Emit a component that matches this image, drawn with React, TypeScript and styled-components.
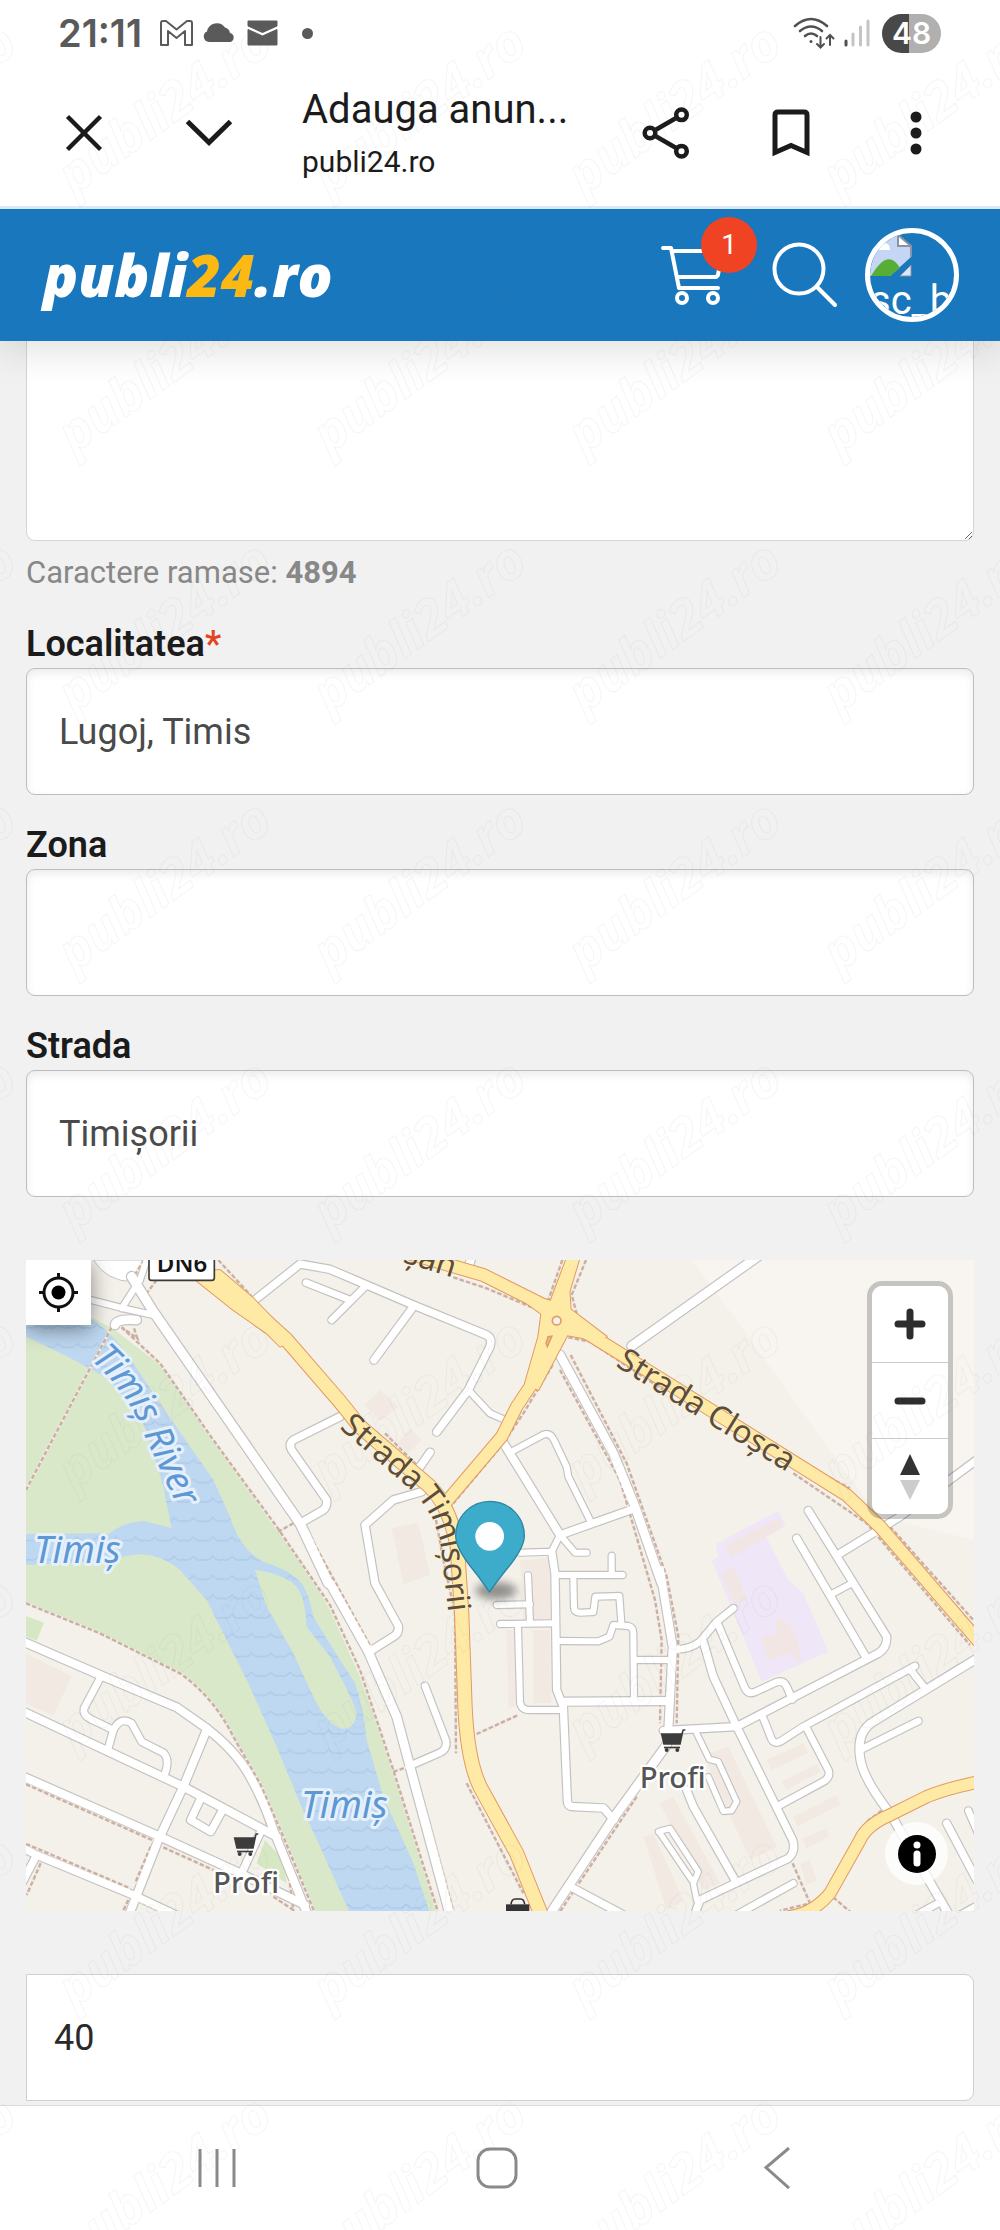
import React from "react";
import styled, { createGlobalStyle } from "styled-components";

const GlobalStyle = createGlobalStyle`
  * { box-sizing: border-box; }
  body {
    margin: 0;
    background: #f1f1f1;
    color: #1b1b1b;
    font-family: Roboto, "Liberation Sans", sans-serif;
  }
  button, input, textarea { font-family: inherit; }
`;

const Page = styled.div`
  position: relative;
  min-height: 100vh;
  display: flex;
  flex-direction: column;
`;

const StatusBar = styled.div`
  display: flex;
  align-items: center;
  justify-content: space-between;
  height: 60px;
  padding: 6px 59px 0 58px;
  background: #fff;
`;

const StatusGroup = styled.div<{ $gap: number }>`
  display: flex;
  align-items: center;
  gap: ${(p) => p.$gap}px;
`;

const Clock = styled.time`
  margin-right: 8px;
  font: 600 38px/40px Inter, Roboto, sans-serif;
  color: #5a5a5a;
`;

const MoreDot = styled.span`
  width: 11px;
  height: 11px;
  margin-left: 14px;
  border-radius: 50%;
  background: #5a5a5a;
`;

const Battery = styled.span`
  width: 59px;
  height: 39px;
  border-radius: 20px;
  background: linear-gradient(90deg, #484848 46%, #b0b0b0 46%);
  color: #fff;
  font: 600 30px/39px Inter, Roboto, sans-serif;
  text-align: center;
`;

const BrowserBar = styled.div`
  display: flex;
  align-items: center;
  gap: 61px;
  height: 149px;
  padding: 0 52px;
  background: #fff;
  border-bottom: 3px solid #dbe9f2;
`;

const IconButton = styled.button`
  display: flex;
  align-items: center;
  justify-content: center;
  flex: none;
  width: 64px;
  height: 64px;
  padding: 0;
  border: 0;
  background: none;
  color: #1b1b1b;
`;

const PageTitle = styled.div`
  flex: 1;
  min-width: 0;
  display: flex;
  flex-direction: column;
  gap: 2px;
  white-space: nowrap;
`;

const TitleText = styled.span`
  font-size: 40px;
  line-height: 56px;
`;

const HostText = styled.span`
  font-size: 30px;
  line-height: 44px;
`;

const SiteHeader = styled.header`
  position: relative;
  z-index: 1;
  display: flex;
  align-items: center;
  justify-content: space-between;
  height: 132px;
  padding: 0 41px 0 43px;
  background: #1877bd;
  box-shadow: 0 6px 40px rgba(0, 0, 0, 0.14);
  clip-path: inset(0 0 -80px 0);
`;

const Logo = styled.a`
  font: italic 800 58px/72px "Open Sans", Lato, sans-serif;
  color: #fff;
  text-decoration: none;
`;

const LogoAccent = styled.span`
  color: #fdb913;
`;

const HeaderActions = styled.div`
  display: flex;
  align-items: center;
  gap: 27px;
`;

const HeaderButton = styled.button`
  position: relative;
  display: flex;
  padding: 0;
  border: 0;
  background: none;
`;

const CartButton = styled(HeaderButton)`
  margin-right: 21px;
`;

const CartBadge = styled.span`
  position: absolute;
  left: 40px;
  top: -28px;
  width: 56px;
  height: 56px;
  border-radius: 50%;
  background: #ef4323;
  color: #fff;
  font-size: 28px;
  line-height: 56px;
  text-align: center;
`;

const Avatar = styled.button`
  display: flex;
  flex-direction: column;
  width: 94px;
  height: 94px;
  padding: 2px 0 0;
  border: 5px solid #fff;
  border-radius: 50%;
  background: none;
  overflow: hidden;
  color: #fff;
  text-align: left;
  font-size: 40px;
  line-height: 46px;
`;

const AvatarIcon = styled.svg`
  flex: none;
`;

const Form = styled.form`
  flex: 1;
  padding: 0 26px 4px;
`;

const Description = styled.textarea`
  display: block;
  width: 100%;
  height: 200px;
  padding: 32px;
  border: 1px solid #d5d5d5;
  border-top: 0;
  border-radius: 0 0 9px 9px;
  background: #fff;
  font-size: 36px;
  resize: vertical;
  outline: 0;
`;

const Counter = styled.p`
  margin: 14px 0 33px;
  color: #888;
  font-size: 31px;
  line-height: 36px;
`;

const Field = styled.div`
  margin-bottom: 30px;
`;

const Label = styled.label`
  display: block;
  margin-bottom: 4px;
  font-size: 36px;
  font-weight: 600;
  line-height: 40px;
`;

const Required = styled.span`
  color: #e4431f;
`;

const TextInput = styled.input`
  display: block;
  width: 100%;
  height: 127px;
  padding: 0 32px;
  border: 1px solid #bdbdbd;
  border-radius: 9px;
  background: #fff;
  box-shadow: inset 0 4px 8px rgba(0, 0, 0, 0.08);
  color: #4a4a4a;
  font-size: 36px;
  outline: 0;
`;

const NumberInput = styled(TextInput)`
  padding: 0 27px;
  border-color: #d0d0d0;
  border-radius: 0 9px 9px 0;
  box-shadow: none;
  color: #2a2a2a;
`;

const MapBox = styled.div`
  position: relative;
  height: 651px;
  margin: 63px 0;
  overflow: hidden;
`;

const MapSvg = styled.svg`
  display: block;
  width: 100%;
  height: 100%;
  font-family: "Noto Sans", "Open Sans", sans-serif;
`;

const LocateButton = styled.button`
  position: absolute;
  left: 0;
  top: 0;
  display: flex;
  align-items: center;
  justify-content: center;
  width: 65px;
  height: 65px;
  padding: 0;
  border: 0;
  background: #fff;
  box-shadow: 0 4px 20px rgba(0, 0, 0, 0.45);
`;

const ZoomControls = styled.div`
  position: absolute;
  right: 21px;
  top: 21px;
  display: flex;
  flex-direction: column;
  width: 86px;
  border: 5px solid rgba(0, 0, 0, 0.2);
  border-radius: 15px;
`;

const ZoomButton = styled.button`
  display: flex;
  align-items: center;
  justify-content: center;
  height: 76px;
  padding: 0;
  border: 0;
  background: #fff;
  & + & { border-top: 1px solid #ccc; }
  &:first-child { border-radius: 10px 10px 0 0; }
  &:last-child { border-radius: 0 0 10px 10px; }
`;

const InfoButton = styled.button`
  position: absolute;
  right: 26px;
  bottom: 26px;
  display: flex;
  align-items: center;
  justify-content: center;
  width: 63px;
  height: 63px;
  padding: 0;
  border: 0;
  border-radius: 50%;
  background: rgba(255, 255, 255, 0.75);
`;

const NavBar = styled.nav`
  display: grid;
  grid-template-columns: repeat(3, 1fr);
  align-items: center;
  justify-items: center;
  height: 125px;
  padding: 0 83px 0 77px;
  border-top: 1px solid #dcdcdc;
  background: #fff;
`;

const WatermarkLayer = styled.svg`
  position: absolute;
  inset: 0;
  z-index: 2;
  width: 100%;
  height: 100%;
  pointer-events: none;
`;

/* ---------- map data: coordinates are local to each map tile ---------- */

type Tile = "NW" | "N" | "NE" | "SW" | "S" | "SE";
type Shape = [tile: Tile, d: string, value?: number];

const tileOffset: Record<Tile, string> = {
  NW: "translate(0 0)",
  N: "translate(990 0)",
  NE: "translate(1980 0)",
  SW: "translate(0 990)",
  S: "translate(990 990)",
  SE: "translate(1980 990)",
};

const streets: Shape[] = [
  ["NW", "M395 110 L460 215 L900 850 L985 1030", 28],
  ["NW", "M265 178 L370 205 L460 225"],
  ["NW", "M440 60 L420 120 L365 205"],
  ["NW", "M410 240 Q350 235 345 255", 26],
  ["NW", "M1020 530 L880 600 Q865 612 875 630 L980 780 Q982 800 970 810 L900 850", 22],
  ["N", "M-225 180 L-90 72 L0 88 L110 135 L250 195 L470 285 Q488 295 480 320 L415 450 L320 576", 22],
  ["N", "M250 200 L132 360", 22],
  ["N", "M105 140 L5 240", 20],
  ["N", "M-72 128 L60 180", 20],
  ["N", "M415 450 L480 520 L525 540"],
  ["N", "M425 50 L413 90", 24],
  ["N", "M300 637 L260 695", 22],
  ["N", "M275 755 L190 780 L105 855 L135 1030 L205 1158 Q208 1180 190 1190 L115 1237", 22],
  ["N", "M515 600 L690 885", 24],
  ["N", "M545 635 L640 584 Q660 576 672 600 L710 680 L715 710 L782 845"],
  ["N", "M690 885 L915 805", 22],
  ["N", "M690 885 L735 938 L770 938"],
  ["N", "M690 885 L665 935 L570 938"],
  ["N", "M665 935 L675 1000 L680 1350 L700 1400 L712 1680 Q712 1700 730 1700 L820 1704 L852 1740", 22],
  ["N", "M690 345 L850 640 L915 800 L995 1030", 26],
  ["N", "M845 947 L845 1003"],
  ["S", "M690 15 L878 15"],
  ["S", "M594 16 L600 158"],
  ["S", "M500 105 L600 103"],
  ["S", "M510 162 L675 160"],
  ["S", "M564 170 L570 395 Q572 420 600 420 L700 420"],
  ["S", "M730 22 L732 112 Q732 128 750 128 L790 126 L796 80 L868 78 L874 160"],
  ["S", "M690 213 L805 214 L838 200 L850 165 L895 168 Q910 172 910 190 L912 390"],
  ["S", "M915 270 L1025 270"],
  ["S", "M700 395 L1020 393", 24],
  ["S", "M0 40 L115 245 L200 440 L240 590 L360 1035", 26],
  ["S", "M285 348 L348 512 Q352 538 330 548 L245 585", 20],
  ["S", "M1010 525 L850 745 L655 1040", 26],
  ["S", "M730 955 L890 1040", 22],
  ["NE", "M-85 318 L300 45", 26],
  ["NE", "M950 660 L720 830 L540 940 ", 22],
  ["SE", "M0 0 L38 230 L25 480", 24],
  ["SE", "M445 -178 L680 200 Q682 232 655 250 L230 470 L10 482", 22],
  ["SE", "M410 -95 L620 265", 22],
  ["SE", "M510 75 L575 40"],
  ["SE", "M220 115 L170 155 L120 215 Q90 238 50 238", 20],
  ["SE", "M175 165 L255 355 Q265 374 285 366 L350 336 Q372 330 380 350 L397 388", 20],
  ["SE", "M130 215 L160 320 L230 470 L398 810 Q408 845 385 865 L120 990 L102 1040", 22],
  ["SE", "M310 445 L335 508 Q345 525 365 512 L430 470 L765 288", 20],
  ["SE", "M752 300 L795 355", 20],
  ["SE", "M960 260 L640 455 Q590 485 600 560 Q605 620 690 730 L870 1040", 24],
  ["SE", "M605 538 L775 453", 20],
  ["SE", "M440 475 L505 600 Q512 618 495 632 L360 705", 20],
  ["SE", "M110 490 L148 568 L175 575 L230 695 L215 722 L190 724 L145 620", 16],
  ["SE", "M80 660 L100 710 L225 930", 22],
  ["SE", "M-5 785 L30 775 L115 905 L100 940 L110 990", 16],
  ["SE", "M0 790 L95 930", 16],
  ["SE", "M400 940 L220 1040", 20],
  ["SE", "M860 760 L950 930", 22],
  ["SE", "M925 722 L955 790", 20],
  ["SE", "M760 1040 L830 1002", 20],
  ["SE", "M890 1040 L950 1008", 20],
  ["SW", "M70 215 L300 315 L530 412 L620 475 Q710 545 750 620 Q790 690 820 780 L925 1040", 24],
  ["SW", "M70 425 L550 650 L830 800", 24],
  ["SW", "M300 325 L252 415 Q248 435 270 446 L340 480 L322 545", 20],
  ["SW", "M340 480 Q362 438 395 460 L425 515 L490 548 Q512 570 492 618", 20],
  ["SW", "M70 620 L480 800 L710 905 L915 1005", 24],
  ["SW", "M620 480 L550 650 L475 810 L385 1040", 24],
  ["SW", "M600 690 L572 750 L632 785 L665 725", 22],
  ["SW", "M780 790 L720 920", 22],
  ["SW", "M70 835 L110 855 L400 975 L560 1050", 22],
  ["SW", "M105 865 L60 950", 22],
];

const mainRoads: Shape[] = [
  ["NW", "M700 155 L860 300 L1020 485 L1080 560 L1290 740 Q1350 800 1372 920 L1385 1120 L1395 1400 Q1402 1560 1440 1640 L1550 1840 L1630 2040", 40],
  ["N", "M230 38 L460 105 L640 195 L690 240 L780 285 L990 415 L1550 765 L1650 860 L1960 1220", 36],
  ["N", "M735 40 L690 190 L670 270 L640 380 L560 500 L515 590 L345 790", 34],
  ["SE", "M390 1040 Q460 1030 510 970 L600 810 Q620 765 690 735 L800 680 Q860 655 960 635", 34],
];

const junctions: Shape[] = [
  ["NW", "M560 98 L660 90 L760 175 L880 300 L840 320 L800 280 L700 210 Z"],
  ["N", "M708 60 L662 182 L600 168 L588 188 L634 222 L625 290 L585 430 L625 450 L712 286 L790 300 L830 290 L722 208 L718 150 L745 60 Z"],
];

const footpaths: Shape[] = [
  ["NW", "M365 262 L480 370 L640 600 L830 860 L990 1095 L1080 1290 L1180 1590 L1315 2020"],
  ["NW", "M335 262 L78 750"],
  ["NW", "M402 265 L412 295 L365 262"],
  ["NW", "M432 60 L395 120 M470 120 L440 160"],
  ["NW", "M655 60 L760 175 M790 215 L870 285 L1020 460"],
  ["NW", "M880 850 L835 875 M920 870 L1120 1235"],
  ["SW", "M78 100 L300 190 L540 310 Q640 380 700 500 L780 640 L850 800 L945 1030"],
  ["SW", "M78 643 L460 812 M490 832 L640 900 M78 822 L110 835 L390 955"],
  ["SW", "M452 830 L405 940 M385 990 L368 1025 M122 880 L80 975 M410 990 L490 1025 M820 980 L880 1020 L868 930"],
  ["N", "M370 112 L470 145 L620 208 M697 60 L655 180 M768 60 L725 165 L740 220"],
  ["N", "M715 292 L780 305 L1000 450 M1390 700 L1610 850 L1920 1215"],
  ["N", "M1410 668 L1560 745 M1680 860 L1930 1140"],
  ["N", "M668 375 L580 520 L520 610 L370 790 M690 390 L870 720 L975 1080 L995 1200 L990 1450"],
  ["N", "M722 345 L890 670 L1010 1010 L1045 1190 L1040 1450 M165 580 L260 675"],
  ["N", "M318 840 L340 960 L375 1120 L378 1540"],
  ["S", "M250 600 L370 1025 M410 640 L580 970 M440 492 L565 435 M920 680 L690 1025"],
  ["S", "M190 605 L235 590"],
  ["SE", "M398 880 L450 1000 L360 1022 M520 982 L570 1025 M665 722 L620 755 L600 800"],
];

const blocks: Shape[] = [
  ["SW", "M78 250 L215 318 L160 437 L78 402 Z"],
  ["N", "M150 450 L205 500 L150 545 L105 495 Z"],
  ["N", "M240 565 L275 600 L235 640 L200 610 Z"],
  ["N", "M185 865 L265 848 L300 1005 L220 1032 Z"],
  ["N", "M570 962 L660 952 L660 1140 L580 1140 Z"],
  ["S", "M610 180 L660 180 L664 400 L610 400 Z"],
  ["S", "M528 180 L552 180 L556 408 L536 414 Z"],
  ["SE", "M130 555 L205 530 L350 830 L270 870 Z"],
  ["SE", "M320 570 L430 520 L445 548 L335 600 Z"],
  ["SE", "M365 635 L470 582 L482 605 L380 660 Z"],
  ["SE", "M400 740 L530 675 L540 705 L412 770 Z"],
  ["SE", "M425 805 L500 775 L508 800 L440 835 Z"],
  ["SE", "M0 700 L40 680 L180 940 L130 960 Z"],
  ["SE", "M-50 800 L-20 790 L70 990 L20 1020 Z"],
  ["SE", "M420 880 L450 870 L470 930 L440 945 Z"],
];

function Strokes({ shapes, color, extra = 0 }: { shapes: Shape[]; color: string; extra?: number }) {
  return (
    <g fill="none" stroke={color} strokeLinecap="round" strokeLinejoin="round">
      {shapes.map(([tile, d, width = 18], i) => (
        <path key={i} d={d} transform={tileOffset[tile]} strokeWidth={width + extra} />
      ))}
    </g>
  );
}

function Areas({ shapes, fill, stroke }: { shapes: Shape[]; fill: string; stroke?: string }) {
  return (
    <g fill={fill} stroke={stroke} strokeWidth={stroke ? 6 : 0} strokeLinejoin="round">
      {shapes.map(([tile, d], i) => (
        <path key={i} d={d} transform={tileOffset[tile]} />
      ))}
    </g>
  );
}

function ShopPin({ x, y }: { x: number; y: number }) {
  return (
    <g transform={`translate(${x} ${y})`} fill="#3c3c3c">
      <path d="M-2 12 L60 12 L64 0 L72 0 L72 4 L67 4 L58 46 L6 46 Z" />
      <path d="M8 52 H56 V57 H8 Z" />
      <circle cx="16" cy="62" r="6" />
      <circle cx="48" cy="62" r="6" />
    </g>
  );
}

function StreetMap() {
  return (
    <MapSvg viewBox="78 60 2844 1953" preserveAspectRatio="xMidYMid slice" role="img" aria-label="Harta">
      <defs>
        <pattern id="waves" width="116" height="58" patternUnits="userSpaceOnUse">
          <path d="M0 20 Q14 38 29 30 Q46 38 58 20 Q72 38 87 30 Q104 38 116 20" fill="none" stroke="#aeca e8" strokeWidth="4" />
          <path d="M0 20 Q14 38 29 30 Q46 38 58 20 Q72 38 87 30 Q104 38 116 20" fill="none" stroke="#aecae8" strokeWidth="4" />
        </pattern>
        <filter id="soft" x="-50%" y="-50%" width="200%" height="200%">
          <feGaussianBlur stdDeviation="12" />
        </filter>
        <path id="river-line" d="M296 332 Q425 450 470 580 L660 990" />
        <path id="timisorii-line" d="M1038 540 L1250 722 Q1335 800 1355 920 L1392 1250" />
        <path id="closca-line" d="M1862 350 L2500 745" />
      </defs>
      <rect x="78" y="60" width="2844" height="1953" fill="#f4f1eb" />
      <path d="M2075 60 L2180 200 L2540 700 L2640 830 L2922 900 L2922 60 Z" fill="#f8f5f0" />
      <path
        d="M78 250 L280 235 L345 270 L500 390 L640 600 L830 870 L945 1030 L990 1110 L1080 1310 L1180 1590 L1320 2020 L945 2020 L850 1790 L780 1630 L700 1490 Q640 1370 540 1300 L300 1180 L78 1090 Z"
        fill="#d9e8c9"
      />
      <path d="M78 1128 L132 1148 L110 1202 L78 1190 Z M795 1800 L850 1860 L860 1930 L770 1870 Z" fill="#d5e8c3" />
      {["#bed8f1", "url(#waves)"].map((fill) => (
        <path
          key={fill}
          d="M78 255 L200 235 L280 240 Q350 290 400 370 L480 490 L640 720 L690 830 Q720 930 790 965 Q870 990 905 1030 Q930 1070 940 1130 L1020 1260 L1065 1330 Q1090 1400 1100 1500 L1150 1670 L1240 1870 L1290 2020 L1050 2020 L960 1820 L900 1690 L830 1520 L750 1340 L690 1220 L620 1080 L540 990 Q480 940 420 943 Q380 945 300 965 L78 975 L78 882 L330 880 Q380 840 440 845 L515 865 L490 740 L450 600 L420 530 L330 420 Q230 360 78 290 Z"
          fill={fill}
        />
      ))}
      <path
        d="M765 990 Q850 1000 890 1040 Q915 1070 920 1160 L990 1250 Q1060 1380 1070 1420 Q1065 1465 1030 1467 Q980 1455 940 1370 L880 1240 L800 1100 Z"
        fill="#d9e8c9"
      />
      <path
        d="M168 912 L355 812 L378 858 L318 890 L385 1020 L430 1060 L505 1235 L305 1325 L225 1130 L155 960 L175 950 Z"
        transform={tileOffset.NE}
        fill="#efe6f8"
      />
      <path
        d="M195 915 L355 835 L370 860 L215 955 Z M182 1000 L225 982 L260 1080 L225 1095 Z M305 1185 L345 1190 L350 1130 L385 1150 L415 1200 L425 1275 L395 1240 L320 1260 Z"
        transform={tileOffset.NE}
        fill="#f2e6e4"
      />
      <Areas shapes={blocks} fill="#f2e9e3" />
      <path d="M280 60 Q320 125 400 125 L440 60 Z" fill="#fff" stroke="#c6c4c3" strokeWidth="3" />
      <Strokes shapes={streets} color="#c4c2c1" extra={7} />
      <g fill="none" stroke="#f3e9e2" strokeWidth="9">
        {footpaths.map(([tile, d], i) => (
          <path key={i} d={d} transform={tileOffset[tile]} />
        ))}
      </g>
      <g fill="none" stroke="#c8b0a2" strokeWidth="7" strokeDasharray="13 7">
        {footpaths.map(([tile, d], i) => (
          <path key={i} d={d} transform={tileOffset[tile]} />
        ))}
      </g>
      <Strokes shapes={streets} color="#ffffff" />
      <Areas shapes={junctions} fill="#e39a62" stroke="#e39a62" />
      <Strokes shapes={mainRoads} color="#e39a62" extra={6} />
      <Areas shapes={junctions} fill="#feeaa4" />
      <Strokes shapes={mainRoads} color="#feeaa4" />
      <circle cx="1670" cy="242" r="13" fill="#f4f1eb" stroke="#e39a62" strokeWidth="5" />
      <path d="M1644 290 L1656 288 L1642 320 L1638 310 Z" fill="#e8b48a" stroke="#e39a62" strokeWidth="4" />

      <g fontSize="96" fill="#5d4c38" stroke="#fdf3d0" strokeWidth="3" paintOrder="stroke">
        <text dy="32">
          <textPath href="#timisorii-line">Strada Timișorii</textPath>
        </text>
        <text dy="32">
          <textPath href="#closca-line">Strada Cloșca</textPath>
        </text>
        <text transform="translate(1206 66) rotate(17)">șan</text>
      </g>
      <g fontSize="112" fontStyle="italic" fill="#5d98d5" stroke="#e6f0fa" strokeWidth="18" strokeLinejoin="round" paintOrder="stroke">
        <text dy="36">
          <textPath href="#river-line">Timiș River</textPath>
        </text>
        <text x="362" y="968" textAnchor="end">Timiș</text>
        <text x="1033" y="1735" textAnchor="middle">Timiș</text>
      </g>
      <g fontSize="88" fontWeight="500" fill="#555" stroke="#fff" strokeWidth="14" strokeLinejoin="round" paintOrder="stroke" textAnchor="middle">
        <text x="738" y="1958">Profi</text>
        <text x="2018" y="1645">Profi</text>
      </g>
      <ShopPin x={703} y={1780} />
      <ShopPin x={1984} y={1468} />
      <g fill="#333">
        <path d="M1518 1993 H1588 V2014 H1518 Z" />
        <path d="M1533 1993 Q1535 1977 1545 1977 H1562 Q1572 1977 1574 1993" fill="none" stroke="#333" strokeWidth="5" />
      </g>
      <rect x="447" y="20" width="196" height="101" rx="8" fill="#fff" stroke="#3b3b3b" strokeWidth="5" />
      <text x="546" y="97" fontSize="72" fontWeight="600" textAnchor="middle" fill="#161616">DN6</text>

      <ellipse cx="1488" cy="1052" rx="62" ry="26" fill="#000" opacity="0.4" filter="url(#soft)" />
      <path
        d="M1468 1056 Q1450 1028 1420 990 Q1367 925 1367 887 A103 103 0 0 1 1573 887 Q1573 925 1518 990 Q1488 1028 1468 1056 Z"
        fill="#3dacca"
        stroke="#2b86a0"
        strokeWidth="4"
      />
      <circle cx="1469" cy="889" r="43" fill="#fff" />
    </MapSvg>
  );
}

function Watermark() {
  return (
    <WatermarkLayer aria-hidden="true">
      <defs>
        <pattern id="mark" x="40" y="0" width="255" height="259" patternUnits="userSpaceOnUse">
          <text
            transform="translate(34 196) rotate(-36)"
            fontFamily="'Open Sans', sans-serif"
            fontSize="52"
            fontWeight="700"
            fontStyle="italic"
            fill="none"
            stroke="#777"
            strokeOpacity="0.07"
          >
            publi24.ro
          </text>
        </pattern>
      </defs>
      <rect width="100%" height="100%" fill="url(#mark)" />
    </WatermarkLayer>
  );
}

function StatusIcons() {
  return (
    <>
      <svg width="33" height="26" viewBox="0 0 33 26" fill="none" stroke="#5a5a5a" strokeWidth="2" strokeLinejoin="round">
        <path d="M1 3 Q1 1 3 1 H6 L16.500 9.500 L27 1 H30 Q32 1 32 3 V25 H25 V11 L16.500 18 L8 11 V25 H1 Z" />
      </svg>
      <svg width="34" height="20" viewBox="0 0 34 20" fill="#5a5a5a">
        <path d="M6 19 A5.500 5.500 0 0 1 4 8.500 A10 10 0 0 1 22 4.500 A7 7 0 0 1 27 10 A4.800 4.800 0 0 1 28 19 Z" />
      </svg>
      <svg width="31" height="26" viewBox="0 0 31 26" fill="#5a5a5a">
        <path d="M1 1 H30 V6 L15.500 12.500 L1 6 Z M1 9.500 L15.500 16 L30 9.500 V25 H1 Z" stroke="#5a5a5a" strokeLinejoin="round" />
      </svg>
    </>
  );
}

function NetworkIcons() {
  return (
    <>
      <svg width="42" height="32" viewBox="0 0 42 32" fill="none" stroke="#505050" strokeWidth="2.600" strokeLinecap="round">
        <path d="M2 9 Q18 -5 34 9" />
        <path d="M7 14 Q18 5 29 14" />
        <path d="M12 19 Q18 14 24 19" />
        <circle cx="18" cy="24.500" r="1.500" fill="#505050" stroke="none" />
        <path d="M27.500 20 V30 M24 27 L27.500 30.500 L31 27 M37 28 V18 M33.500 21.500 L37 18 L40.500 21.500" strokeWidth="2" />
      </svg>
      <svg width="29" height="28" viewBox="0 0 29 28" strokeWidth="3" strokeLinecap="round" stroke="#c4c4c4">
        <path d="M2 22 V26" stroke="#505050" />
        <path d="M9 15 V26 M16.500 8 V26 M24 2 V26" />
      </svg>
    </>
  );
}

export default function App() {
  return (
    <Page>
      <GlobalStyle />
      <StatusBar>
        <StatusGroup $gap={10}>
          <Clock>21:11</Clock>
          <StatusIcons />
          <MoreDot />
        </StatusGroup>
        <StatusGroup $gap={9}>
          <NetworkIcons />
          <Battery>48</Battery>
        </StatusGroup>
      </StatusBar>

      <BrowserBar>
        <IconButton aria-label="Inchide">
          <svg width="38" height="38" viewBox="0 0 38 38" stroke="currentColor" strokeWidth="4.500">
            <path d="M2.500 2.500 L35.500 35.500 M35.500 2.500 L2.500 35.500" />
          </svg>
        </IconButton>
        <IconButton aria-label="Minimizeaza">
          <svg width="48" height="28" viewBox="0 0 48 28" fill="none" stroke="currentColor" strokeWidth="5">
            <path d="M2.500 2.500 L24 23.500 L45.500 2.500" />
          </svg>
        </IconButton>
        <PageTitle>
          <TitleText>Adauga anun...</TitleText>
          <HostText>publi24.ro</HostText>
        </PageTitle>
        <IconButton aria-label="Distribuie">
          <svg width="48" height="52" viewBox="0 0 48 52" fill="none" stroke="currentColor" strokeWidth="4.500">
            <circle cx="8" cy="26" r="5.300" />
            <circle cx="39.500" cy="7.800" r="5.300" />
            <circle cx="39.500" cy="44.200" r="5.300" />
            <path d="M12.500 23.500 L35 10.500 M12.500 28.500 L35 41.500" />
          </svg>
        </IconButton>
        <IconButton aria-label="Marcaj">
          <svg width="38" height="48" viewBox="0 0 38 48" fill="none" stroke="currentColor" strokeWidth="5">
            <path d="M3 43.500 V6 Q3 3 6 3 H32 Q35 3 35 6 V43.500 L19 36.500 Z" />
          </svg>
        </IconButton>
        <IconButton aria-label="Meniu">
          <svg width="12" height="44" viewBox="0 0 12 44" fill="currentColor">
            <circle cx="6" cy="6" r="5.500" />
            <circle cx="6" cy="22" r="5.500" />
            <circle cx="6" cy="38" r="5.500" />
          </svg>
        </IconButton>
      </BrowserBar>

      <SiteHeader>
        <Logo href="#">
          publi<LogoAccent>24</LogoAccent>.ro
        </Logo>
        <HeaderActions>
          <CartButton aria-label="Cos">
            <svg width="63" height="60" viewBox="0 0 63 60" fill="none" stroke="#fff" strokeWidth="4" strokeLinecap="round" strokeLinejoin="round">
              <path d="M2 3 H10 L18 43 H57 M13 6 H61 L57 30 Q56 32 54 32 H17" />
              <circle cx="21" cy="53" r="5" />
              <circle cx="52" cy="53" r="5" />
            </svg>
            <CartBadge>1</CartBadge>
          </CartButton>
          <HeaderButton aria-label="Cauta">
            <svg width="66" height="66" viewBox="0 0 66 66" fill="none" stroke="#fff" strokeWidth="4" strokeLinecap="round">
              <circle cx="27" cy="27" r="24.500" />
              <path d="M45 45 L63 63" />
            </svg>
          </HeaderButton>
          <Avatar>
            <AvatarIcon width="43" height="43" viewBox="0 0 43 43" aria-hidden="true">
              <path d="M0 0 H29 L41 11 V22 L20 41 H0 Z" fill="#c5d6f4" />
              <path d="M2 13 Q6 4 14 8 Q20 8 20 15 H2 Z" fill="#fff" />
              <path d="M1 41 Q18 12 30 33 L20 41 Z" fill="#57ae34" />
              <path d="M28 0 V11 H41" fill="#fff" stroke="#8a93a3" strokeWidth="2" />
              <path d="M28 0 L41 11 V22" fill="none" stroke="#8a93a3" strokeWidth="2" />
              <path d="M41 30 V41 H30 Z" fill="#dbe6f8" stroke="#8a93a3" />
            </AvatarIcon>
            sc_b
          </Avatar>
        </HeaderActions>
      </SiteHeader>

      <Form>
        <Description aria-label="Descriere" />
        <Counter>
          Caractere ramase: <b>4894</b>
        </Counter>
        <Field>
          <Label htmlFor="city">
            Localitatea<Required>*</Required>
          </Label>
          <TextInput id="city" defaultValue="Lugoj, Timis" />
        </Field>
        <Field>
          <Label htmlFor="area">Zona</Label>
          <TextInput id="area" />
        </Field>
        <Field>
          <Label htmlFor="street">Strada</Label>
          <TextInput id="street" defaultValue="Timișorii" />
        </Field>

        <MapBox>
          <StreetMap />
          <LocateButton type="button" aria-label="Locatia mea">
            <svg width="39" height="39" viewBox="0 0 39 39" fill="none" stroke="#111" strokeWidth="3">
              <circle cx="19.500" cy="19.500" r="14.500" />
              <circle cx="19.500" cy="19.500" r="7" fill="#000" stroke="none" />
              <path d="M19.500 0 V6 M19.500 33 V39 M0 19.500 H6 M33 19.500 H39" />
            </svg>
          </LocateButton>
          <ZoomControls>
            <ZoomButton type="button" aria-label="Mareste">
              <svg width="32" height="32" viewBox="0 0 32 32" stroke="#2d2d2d" strokeWidth="7" strokeLinecap="round">
                <path d="M4 16 H28 M16 4 V28" />
              </svg>
            </ZoomButton>
            <ZoomButton type="button" aria-label="Micsoreaza">
              <svg width="32" height="8" viewBox="0 0 32 8" stroke="#2d2d2d" strokeWidth="7" strokeLinecap="round">
                <path d="M4 4 H28" />
              </svg>
            </ZoomButton>
            <ZoomButton type="button" aria-label="Orienteaza spre nord">
              <svg width="22" height="46" viewBox="0 0 22 46">
                <path d="M11 0 L21 21 H1 Z" fill="#333" />
                <path d="M11 46 L21 26 H1 Z" fill="#ccc" />
              </svg>
            </ZoomButton>
          </ZoomControls>
          <InfoButton type="button" aria-label="Informatii harta">
            <svg width="38" height="38" viewBox="0 0 38 38">
              <circle cx="19" cy="19" r="19" />
              <circle cx="19" cy="10" r="3.500" fill="#fff" />
              <path d="M19 19 V28" stroke="#fff" strokeWidth="7" strokeLinecap="round" />
            </svg>
          </InfoButton>
        </MapBox>

        <NumberInput aria-label="Numar" inputMode="numeric" defaultValue="40" />
      </Form>

      <NavBar>
        <IconButton aria-label="Aplicatii recente">
          <svg width="38" height="40" viewBox="0 0 38 40" stroke="#8a8a8a" strokeWidth="3">
            <path d="M2 1 V39 M19 1 V39 M36 1 V39" />
          </svg>
        </IconButton>
        <IconButton aria-label="Acasa">
          <svg width="42" height="42" viewBox="0 0 42 42" fill="none" stroke="#8a8a8a" strokeWidth="3">
            <rect x="2" y="2" width="38" height="38" rx="12" />
          </svg>
        </IconButton>
        <IconButton aria-label="Inapoi">
          <svg width="27" height="42" viewBox="0 0 27 42" fill="none" stroke="#8a8a8a" strokeWidth="3">
            <path d="M25 1 L2 20.500 L25 41" />
          </svg>
        </IconButton>
      </NavBar>
      <Watermark />
    </Page>
  );
}
